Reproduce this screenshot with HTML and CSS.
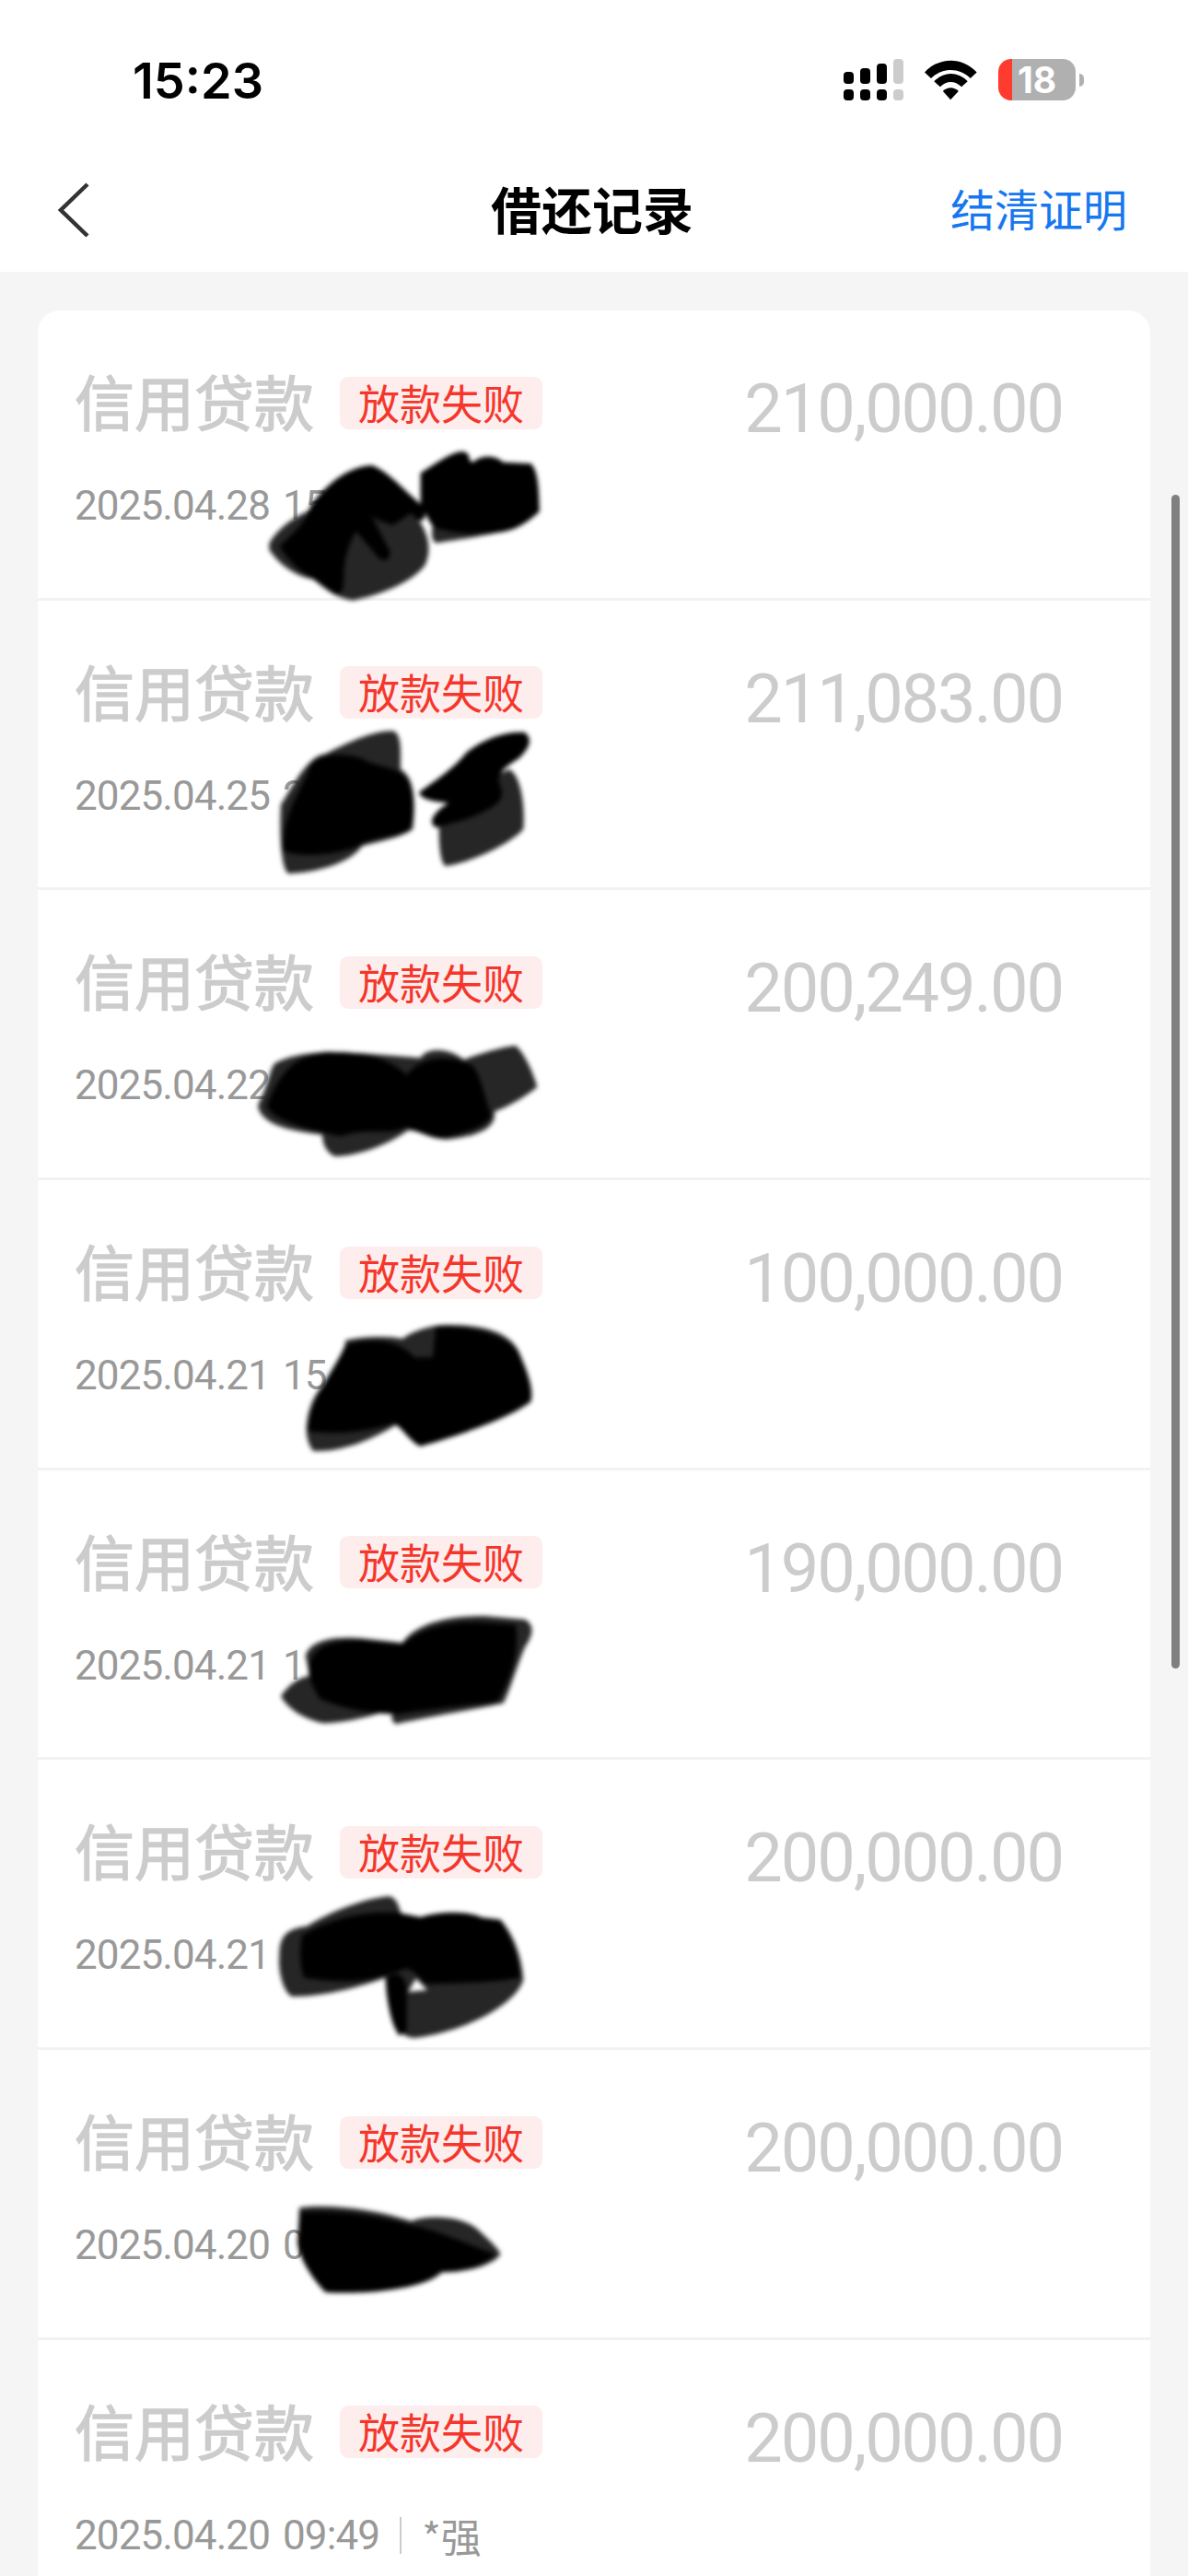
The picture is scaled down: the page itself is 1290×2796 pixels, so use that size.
FILE: index.html
```html
<!DOCTYPE html>
<html lang="zh-CN">
<head>
    <meta charset="UTF-8">
    <meta name="viewport" content="width=device-width, initial-scale=1.0">
    <title>借还记录</title>
    <link rel="stylesheet" href="styles.css">
</head>
<body>
    <div class="page">
        <div class="status-bar">
            <span class="time">15:23</span>
            <div class="status-icons">
                <svg class="signal" viewBox="0 0 65 45" width="65" height="45">
                    <rect x="0" y="14" width="11" height="13" rx="4" fill="#000"/>
                    <rect x="18" y="10" width="11" height="17" rx="4" fill="#000"/>
                    <rect x="36" y="5" width="11" height="22" rx="4" fill="#000"/>
                    <rect x="54" y="0" width="11" height="27" rx="4" fill="#ccc"/>
                    <rect x="0" y="33" width="11" height="12" rx="4" fill="#000"/>
                    <rect x="18" y="33" width="11" height="12" rx="4" fill="#000"/>
                    <rect x="36" y="33" width="11" height="12" rx="4" fill="#000"/>
                    <rect x="54" y="33" width="11" height="12" rx="4" fill="#ccc"/>
                </svg>
                <svg class="wifi" viewBox="372 70 172 135" width="57" height="45">
                    <path d="M372 113C420 62 495 62 543 113L522 133C485 97 430 97 393 133Z"/>
                    <path d="M403 143C435 110 480 110 513 143L493 161C470 140 445 140 423 161Z"/>
                    <path d="M432 175C447 160 468 160 483 175L457 203Z"/>
                </svg>
                <div class="battery-wrap">
                    <div class="battery">18</div>
                    <div class="battery-nub"></div>
                </div>
            </div>
        </div>

        <nav class="nav-bar">
            <svg class="back" viewBox="0 0 36 60" width="36" height="60">
                <path d="M33 2L4 30L33 58" fill="none" stroke="#333" stroke-width="4.5"/>
            </svg>
            <h1>借还记录</h1>
            <a class="nav-link">结清证明</a>
        </nav>

        <div class="records">
            <div class="record">
                <div class="record-info">
                    <div class="record-head"><span class="record-name">信用贷款</span><span class="tag">放款失败</span></div>
                    <div class="record-meta">2025.04.28 15</div>
                </div>
                <div class="amount">210,000.00</div>
            </div>
            <div class="record">
                <div class="record-info">
                    <div class="record-head"><span class="record-name">信用贷款</span><span class="tag">放款失败</span></div>
                    <div class="record-meta">2025.04.25 2</div>
                </div>
                <div class="amount">211,083.00</div>
            </div>
            <div class="record">
                <div class="record-info">
                    <div class="record-head"><span class="record-name">信用贷款</span><span class="tag">放款失败</span></div>
                    <div class="record-meta">2025.04.22</div>
                </div>
                <div class="amount">200,249.00</div>
            </div>
            <div class="record">
                <div class="record-info">
                    <div class="record-head"><span class="record-name">信用贷款</span><span class="tag">放款失败</span></div>
                    <div class="record-meta">2025.04.21 15</div>
                </div>
                <div class="amount">100,000.00</div>
            </div>
            <div class="record">
                <div class="record-info">
                    <div class="record-head"><span class="record-name">信用贷款</span><span class="tag">放款失败</span></div>
                    <div class="record-meta">2025.04.21 1</div>
                </div>
                <div class="amount">190,000.00</div>
            </div>
            <div class="record">
                <div class="record-info">
                    <div class="record-head"><span class="record-name">信用贷款</span><span class="tag">放款失败</span></div>
                    <div class="record-meta">2025.04.21</div>
                </div>
                <div class="amount">200,000.00</div>
            </div>
            <div class="record">
                <div class="record-info">
                    <div class="record-head"><span class="record-name">信用贷款</span><span class="tag">放款失败</span></div>
                    <div class="record-meta">2025.04.20 0</div>
                </div>
                <div class="amount">200,000.00</div>
            </div>
            <div class="record">
                <div class="record-info">
                    <div class="record-head"><span class="record-name">信用贷款</span><span class="tag">放款失败</span></div>
                    <div class="record-meta">2025.04.20 09:49<span class="meta-sep"></span><span class="meta-name">*强</span></div>
                </div>
                <div class="amount">200,000.00</div>
            </div>
        </div>

        <div class="scrollbar"></div>

        <!-- hand drawn redaction marks, on top of the list -->
        <svg class="redactions" viewBox="0 0 1290 2796" width="1290" height="2796">
            <g transform="translate(260 470) scale(.3333)">
                <path class="soft" d="M97 360C130 300 200 260 260 240L560 250C610 310 632 370 605 430C560 490 450 530 370 545C320 540 280 510 240 475C190 470 130 430 97 380Z"/>
                <path d="M130 370C170 330 220 290 230 240C280 170 350 110 430 105C480 120 540 190 600 240C615 290 590 300 560 260L500 300C470 290 440 280 430 270L490 385C495 420 460 425 440 390L380 320C350 370 340 420 340 470C340 530 320 535 290 510C240 470 190 460 130 370Z"/>
                <path class="soft" d="M630 300L800 250L900 300C860 330 720 345 640 358C625 350 625 320 630 300Z"/>
                <path d="M590 130C640 100 690 60 730 60C760 70 740 90 760 95C790 70 830 70 860 95L950 100C980 130 975 230 978 255C930 300 880 330 800 325C740 335 680 320 640 310C620 300 620 280 590 240Z"/>
                <path class="soft" d="M135 1210C170 1160 220 1050 280 1045C350 1010 430 970 500 970C530 980 525 1040 525 1095C570 1120 575 1200 565 1290C520 1320 450 1330 400 1345C360 1400 260 1430 160 1435C135 1420 130 1300 135 1210Z"/>
                <path d="M140 1360C140 1250 190 1180 225 1100C240 1040 330 1040 400 1060C440 1090 510 1080 550 1130C575 1200 570 1260 550 1295C490 1320 420 1320 390 1345C310 1375 200 1385 140 1360Z"/>
                <path class="soft" d="M650 1270L800 1130L880 1095C920 1120 930 1220 925 1290C880 1340 750 1400 670 1410C650 1390 650 1320 650 1270Z"/>
                <path d="M585 1170C640 1130 700 1090 740 1040C800 990 880 970 930 975C960 1000 940 1030 910 1060C870 1085 830 1110 850 1150C880 1210 780 1240 730 1260L640 1285C615 1270 625 1240 680 1205C640 1200 590 1195 585 1170Z"/>
            </g>
            <g transform="translate(260 1100) scale(.3333)">
                <path class="soft" d="M60 300C100 220 100 170 120 160C200 120 300 125 400 130L590 145C610 110 680 110 730 150C790 130 850 110 900 105C930 130 960 200 970 240C920 280 860 310 830 320C840 370 780 400 680 410C620 410 590 380 550 380C480 430 380 465 310 465C280 450 270 420 270 395C190 385 70 370 60 300Z"/>
                <path d="M90 300C120 220 160 140 280 125C380 125 480 135 545 200C590 140 680 130 760 170C790 210 800 280 820 330C810 370 720 395 660 405C610 405 580 380 540 370C500 400 420 370 330 400C250 385 100 350 90 300Z"/>
                <path class="soft" d="M220 1330C230 1240 290 1180 340 1160L345 1065C400 1050 500 1050 530 1060C570 1030 640 1010 700 1015C800 1015 880 1040 910 1100C940 1170 960 1220 950 1265C880 1320 700 1380 590 1410C560 1400 530 1350 510 1340C430 1390 330 1430 240 1425C220 1400 215 1360 220 1330Z"/>
                <path d="M222 1360C235 1240 300 1180 345 1080C420 1055 520 1060 570 1120L630 1120L640 1018C740 1018 860 1040 905 1100C938 1170 955 1230 945 1262C860 1322 700 1378 590 1408C560 1398 530 1345 500 1335C420 1360 320 1375 222 1360Z"/>
            </g>
            <g transform="translate(260 1720) scale(.3333 .4847)">
                <path class="soft" d="M135 250C170 215 210 205 230 205L215 160C230 125 300 115 400 120L530 130C580 85 680 70 800 70L930 78C960 90 960 110 930 140C900 190 880 240 860 265C800 275 620 295 510 312C490 305 495 290 505 275C440 295 340 310 270 310C210 300 160 280 135 250Z"/>
                <path d="M225 190C235 135 300 125 400 125L530 135C590 95 700 80 800 85L900 90C915 150 880 220 840 262C720 272 610 280 520 290C440 290 340 280 260 255C240 230 225 210 225 190Z"/>
                <path class="soft" d="M130 830C130 790 150 770 220 765C300 730 420 700 490 698C520 705 520 730 530 740L590 745C650 730 750 730 790 745L850 750C890 780 920 830 925 885C900 940 740 1000 570 1015C510 1015 480 960 475 880C400 900 260 925 170 922C140 910 125 860 130 830Z"/>
                <path d="M205 785C300 745 420 730 520 735L590 745C650 732 750 732 790 748L850 752C885 790 910 830 915 880C800 895 700 890 610 895C580 880 570 860 540 860C440 890 340 895 210 880C195 850 195 810 205 785Z"/>
                <path d="M480 880C520 860 545 880 545 915L545 1000L520 1010C490 980 480 930 480 880Z"/>
                <path class="gap" d="M550 912L575 882L612 908Z"/>
                <path class="soft" d="M190 1470L195 1395C300 1385 450 1400 560 1425C620 1410 720 1415 770 1440C810 1465 850 1490 850 1500C830 1520 760 1540 660 1540C600 1580 400 1590 280 1585C230 1550 190 1500 190 1470Z"/>
                <path d="M190 1470L200 1405C300 1400 450 1410 560 1435C620 1440 720 1470 835 1500C790 1528 720 1538 650 1538C600 1578 400 1588 285 1583C230 1548 190 1500 190 1470Z"/>
            </g>
        </svg>
    </div>
</body>
</html>
```

FILE: styles.css
```css
* {
    margin: 0;
    padding: 0;
    box-sizing: border-box;
}

body {
    font-family: "Noto Sans CJK SC", sans-serif;
    background-color: #f5f5f5;
}

.page {
    position: relative;
    width: 1290px;
    height: 2796px;
    overflow: hidden;
}

/* status bar */
.status-bar {
    height: 130px;
    background: #fff;
    display: flex;
    justify-content: space-between;
    padding: 64px 113px 0 144px;
}

.time {
    font-family: "Inter", sans-serif;
    font-size: 54px;
    font-weight: 600;
    line-height: 48px;
    color: #000;
}

.status-icons {
    display: flex;
    align-items: flex-start;
    gap: 23px;
}

.battery-wrap {
    display: flex;
    align-items: center;
    gap: 4px;
}

.battery {
    width: 84px;
    height: 45px;
    border-radius: 14px;
    background: linear-gradient(90deg, #ff3b30 15px, #b0b0b0 15px);
    color: #fff;
    font-family: "Inter", sans-serif;
    font-size: 39px;
    font-weight: 700;
    line-height: 45px;
    text-align: center;
}

.battery-nub {
    width: 5px;
    height: 14px;
    border-radius: 0 5px 5px 0;
    background: #b0b0b0;
}

/* nav */
.nav-bar {
    height: 165px;
    background: #fff;
    display: grid;
    grid-template-columns: 1fr auto 1fr;
    align-items: center;
    padding: 30px 66px 0 62px;
}

.nav-bar h1 {
    margin-bottom: 6px;
    font-size: 55px;
    font-weight: 700;
    line-height: 60px;
    color: #000;
}

.nav-link {
    justify-self: end;
    margin-bottom: 6px;
    font-size: 48px;
    line-height: 60px;
    color: #1677f0;
}

/* list */
.records {
    margin: 42px 41px 0;
    background: #fff;
    border-radius: 24px 24px 0 0;
}

.record {
    height: 314.7px;
    display: flex;
    justify-content: space-between;
    padding: 55px 95px 0 40px;
    border-bottom: 3px solid #f2f2f2;
}

.record-head {
    display: flex;
    align-items: center;
    gap: 28px;
    height: 84px;
}

.record-name {
    font-size: 65px;
    line-height: 84px;
    color: #ccc;
    -webkit-text-stroke: 1.4px #ccc;
}

.tag {
    height: 57px;
    margin-top: 6px;
    padding: 0 20px;
    border-radius: 9px;
    background: #fdeded;
    color: #f5362b;
    font-size: 45px;
    line-height: 55px;
}

.record-meta {
    display: flex;
    align-items: center;
    margin-top: 43px;
    height: 60px;
    font-family: "Roboto", sans-serif;
    font-size: 44px;
    letter-spacing: -0.9px;
    word-spacing: 4px;
    white-space: pre;
    color: #999;
}

.meta-sep {
    width: 2px;
    height: 40px;
    margin: 0 22px 0 22px;
    background: #ccc;
}

.meta-name {
    font-family: "Noto Sans CJK SC", sans-serif;
    letter-spacing: 0;
}

.amount {
    font-family: "Roboto", sans-serif;
    font-size: 74px;
    line-height: 84px;
    margin-top: 10px;
    letter-spacing: -2.1px;
    color: #ccc;
}

/* things on top of the list */
.scrollbar {
    position: absolute;
    left: 1272px;
    top: 537px;
    width: 9px;
    height: 1274px;
    border-radius: 5px;
    background: #808080;
}

.redactions {
    position: absolute;
    left: 0;
    top: 0;
    filter: blur(2.5px);
}

.redactions path {
    fill: #000;
}

.redactions path.soft {
    fill: #262626;
}

.redactions path.gap {
    fill: #fff;
}
```
